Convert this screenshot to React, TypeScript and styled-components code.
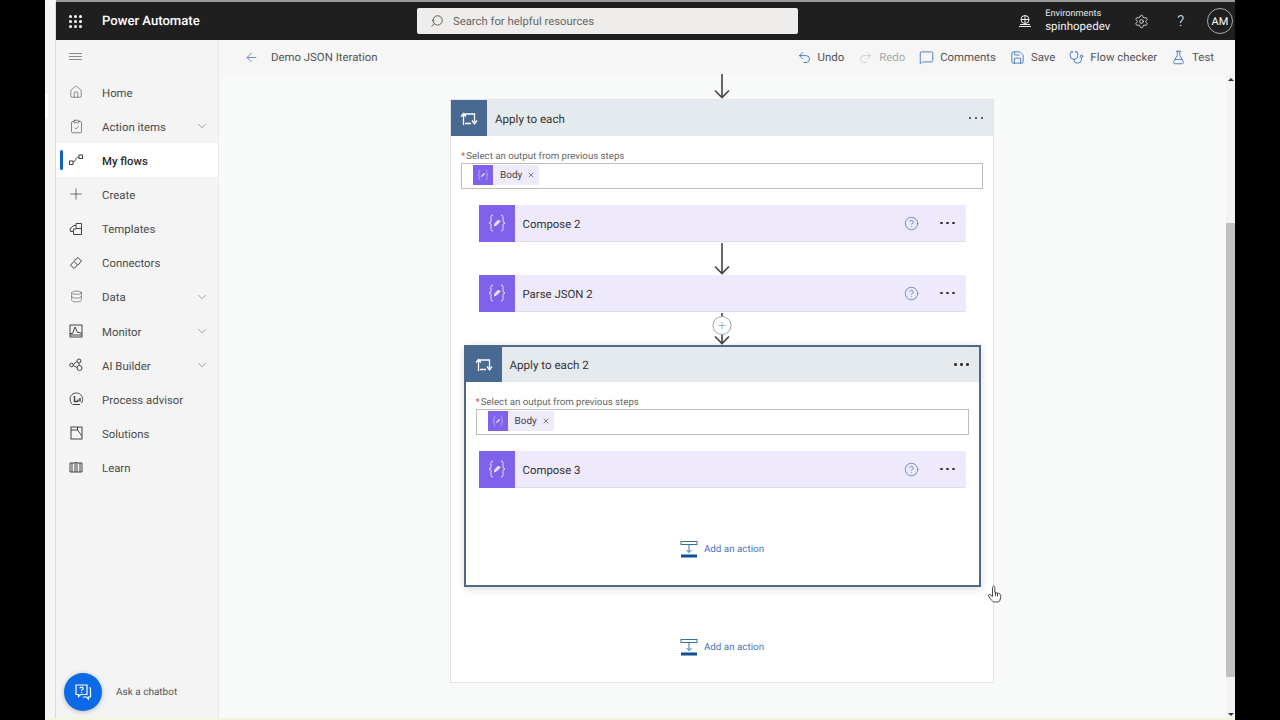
import React from 'react';
import styled, { createGlobalStyle } from 'styled-components';
import { ChevronDown, Plus, Undo2, Redo2, Settings, HelpCircle, Save, Stethoscope, FlaskConical, MessageSquare, ArrowLeft, Search, Home, ClipboardCheck, Database, X } from 'lucide-react';

const Global = createGlobalStyle`
  html, body { margin: 0; padding: 0; height: 100%; background: #000; overflow: hidden; }
  * { box-sizing: border-box; }
  body { font-family: Roboto, "Open Sans", sans-serif; text-rendering: geometricPrecision; }
`;

const Stage = styled.div`
  width: 1280px; height: 720px; display: flex; background: #000; position: relative; overflow: hidden;
`;
const Frame = styled.div`
  margin-left: 45px; width: 1190px; height: 720px; background: #f5f5f5; padding: 0 0 2px 11px; position: relative;
  border-bottom: 2px solid #f5f4dc;
  &::before { content: ''; position: absolute; left: 0; top: 94px; width: 3px; height: 24px; background: #fff; }
  &::after { content: ''; position: absolute; left: 10px; top: 2px; bottom: 0; width: 1px; background: #dcdcdc; }
`;
const Screen = styled.div`
  width: 100%; height: 716px; border-top: 2px solid #9b9b9b; display: flex; flex-direction: column; background: #f8f8f8; box-sizing: content-box;
`;
const TopBar = styled.header`
  height: 38px; background: #1f1f1f; color: #fff; display: flex; align-items: center; padding-left: 13px; flex: none;
`;
const Waffle = styled.div`
  width: 13px; display: grid; grid-template-columns: repeat(3, 3px); gap: 2px;
  span { width: 3px; height: 3px; background: #fff; border-radius: 50%; }
`;
const Brand = styled.div`
  margin-left: 20px; font-size: 13.1px; font-weight: 500; width: 315px; white-space: nowrap;
`;
const SearchBox = styled.div`
  width: 381px; height: 26px; background: #eeedeb; border-radius: 2px; display: flex; align-items: center; gap: 9px; padding-left: 13px;
  color: #666; font-size: 11.3px;
`;
const Right = styled.div`
  margin-left: auto; display: flex; align-items: center; height: 100%;
`;
const Env = styled.div`
  display: flex; flex-direction: column; margin: 0 0 2px 13px; width: 74px; line-height: 13px;
  small { font-size: 9.2px; color: #e8e8e8; }
  b { font-weight: 400; font-size: 11.5px; color: #f2f2f2; white-space: nowrap; }
`;
const Avatar = styled.div`
  width: 26px; height: 26px; border-radius: 50%; border: 1px solid #aaa; font-size: 11px; font-weight: 400; display: flex; align-items: center; justify-content: center; margin: 0 2px 0 23px;
`;
const GearButton = styled.div`
  margin-left: 15px; display: flex; align-items: center;
`;
const HelpMark = styled.div`
  margin-left: 28px; font-size: 15px; font-weight: 300; display: flex; align-items: center;
`;
const Body = styled.div`
  flex: 1; min-height: 0; display: flex;
`;
const Sidebar = styled.nav`
  width: 163px; flex: none; background: #f4f4f4; border-right: 1px solid #e8e8e8; display: flex; flex-direction: column; position: relative;
`;
const Burger = styled.div`
  height: 35px; padding: 13px 0 0 13px;
  span { display: block; width: 13px; height: 1px; margin-bottom: 2px; background: #8a8a8a; }
`;
const NavList = styled.ul`
  list-style: none; margin: 0; padding: 0;
`;
const NavItem = styled.li<{ $active?: boolean }>`
  height: 34.15px; display: flex; align-items: center; position: relative; padding-left: 10px;
  background: ${p => p.$active ? '#fff' : 'transparent'};
  color: ${p => p.$active ? '#2b2b2b' : '#4c4c4c'};
  font-size: 11.4px; font-weight: ${p => p.$active ? 500 : 400};
  span { margin-left: 16px; padding-top: 1px; flex: 1; white-space: nowrap; }
  svg.chev { margin-right: 9px; color: #666; }
  ${p => p.$active ? `&::before { content: ''; position: absolute; left: 4px; top: 7px; height: 20px; width: 3px; border-radius: 2px; background: #0f62c4; }` : ''}
`;
const IconSlot = styled.div`
  width: 20px; height: 20px; flex: none; display: flex; align-items: center; justify-content: center; color: #444;
`;
const Chatbot = styled.div`
  position: absolute; left: 8px; bottom: 7px; display: flex; align-items: center; gap: 14px; font-size: 10px; color: #555;
`;
const ChatCircle = styled.div`
  width: 38px; height: 38px; border-radius: 50%; background: #0b6ae6; display: flex; align-items: center; justify-content: center; box-shadow: 0 1px 5px rgba(0,0,0,.25);
`;
const Main = styled.main`
  flex: 1; min-width: 0; display: flex; flex-direction: column; position: relative;
`;
const Toolbar = styled.div`
  height: 34px; flex: none; background: #f6f6f6; display: flex; align-items: center; padding: 0 21px 0 25px; color: #555; font-size: 11.4px;
`;
const Title = styled.div`
  margin-left: 12px; color: #555; flex: 1;
`;
const Tool = styled.div<{ $off?: boolean }>`
  display: flex; align-items: center; gap: 6px; margin-left: 14px; color: ${p => p.$off ? '#aaa' : '#555'};
  svg { color: ${p => p.$off ? '#ccc' : '#3a6fb8'}; }
`;
const CanvasRow = styled.div`
  flex: 1; min-height: 0; display: flex;
`;
const Canvas = styled.div`
  flex: 1; min-width: 0; display: flex; flex-direction: column; align-items: center; overflow: hidden; background: #f8f9f9; padding-right: 1px;
`;
const Scrollbar = styled.div`
  width: 9px; flex: none; background: #f3f3f3; display: flex; flex-direction: column; padding-top: 149px; padding-bottom: 6px; position: relative;
  &::before, &::after { content: ''; position: absolute; left: 2px; border-left: 3px solid transparent; border-right: 3px solid transparent; }
  &::before { top: 4px; border-bottom: 3px solid #333; }
  &::after { bottom: 2px; border-top: 3px solid #333; }
`;
const Thumb = styled.div`
  height: 454px; background: #c1c1c1;
`;
const Connector = styled.div<{ $h: number }>`
  height: ${p => p.$h}px; flex: none; display: flex; justify-content: center; align-items: flex-end; position: relative; width: 100%;
`;
const Scope = styled.section<{ $nested?: boolean }>`
  flex: none;
  width: ${p => p.$nested ? 517 : 544}px;
  height: ${p => p.$nested ? 242 : 584}px;
  background: #fff;
  border: 1px solid ${p => p.$nested ? '#4e6a88' : '#e2e4e6'};
  ${p => p.$nested ? 'border-width: 2px; box-shadow: 0 2px 8px rgba(0,0,0,.14);' : ''}
  display: flex; flex-direction: column; align-items: center;
`;
const ScopeHead = styled.div<{ $nested?: boolean }>`
  width: 100%; height: ${p => p.$nested ? 35 : 36}px; flex: none; background: #e4eaed; display: flex; align-items: center; color: #333; font-size: 11.6px;
`;
const ScopeIcon = styled.div`
  width: 36px; height: 100%; flex: none; background: #486991; display: flex; align-items: center; justify-content: center;
`;
const HeadText = styled.div`
  margin-left: 8px; padding-top: 1px; flex: 1; white-space: nowrap;
`;
const Dots = styled.div<{ $r: number }>`
  display: flex; gap: 3.5px; margin-right: ${p => p.$r}px;
  i { width: 2.4px; height: 2.4px; border-radius: 50%; background: #333; }
`;
const Label = styled.div`
  align-self: flex-start; margin: 15px 0 0 10px; font-size: 9.7px; line-height: 12px; color: #666; white-space: nowrap;
  em { color: #c55; font-style: normal; margin-right: 1px; }
`;
const TokenInput = styled.div<{ $w: number }>`
  width: ${p => p.$w}px; height: 26px; flex: none; margin-bottom: 16px; background: #fff; border: 1px solid #bdbdbd; display: flex; align-items: center; padding-left: 11px;
`;
const Token = styled.div`
  height: 20px; margin-bottom: 2px; display: flex; align-items: center; background: #efebfb; font-size: 10px; color: #444; padding-right: 4px;
  b { width: 20px; height: 20px; background: #8061ec; display: flex; align-items: center; justify-content: center; margin-right: 7px; }
  svg.x { margin-left: 5px; color: #333; }
`;
const Action = styled.div`
  width: 487px; height: 37px; flex: none; background: #eeeafc; display: flex; align-items: center; font-size: 11.4px; color: #333; border-bottom: 1px solid #dedbea;
`;
const ActionIcon = styled.div`
  width: 36px; height: 37px; flex: none; background: #8061ec; display: flex; align-items: center; justify-content: center;
`;
const ActionText = styled.div`
  margin-left: 8px; padding-top: 2px; flex: 1; white-space: nowrap;
`;
const Help = styled.div`
  margin-right: 21px; display: flex; color: #4a72b5;
`;
const AddAction = styled.div<{ $top: number }>`
  display: flex; align-items: center; gap: 6px; margin-top: ${p => p.$top}px; color: #4c74b8; font-size: 9.8px;
`;
const PlusCircle = styled.div`
  position: absolute; left: 50%; top: 4px; transform: translateX(-50%); width: 19px; height: 19px; border-radius: 50%; background: #fff; border: 1px solid #9aa; display: flex; align-items: center; justify-content: center; color: #3a86b8;
`;
const Cursor = styled.div`
  position: absolute; left: 987px; top: 585px; color: #333;
`;

const Arrow = ({ h }: { h: number }) => (
  <svg width="16" height={h} viewBox={`0 0 16 ${h}`} fill="none" stroke="#444" strokeWidth="1.6">
    <path d={`M8 0V${h - 1}M1 ${h - 8.5}L8 ${h - 1.5}L15 ${h - 8.5}`} />
  </svg>
);
const LoopIcon = () => (
  <svg width="18" height="15" viewBox="0 0 18 15" fill="none" stroke="#fff" strokeWidth="1.3">
    <path d="M3.500 14V3H14.500V11M1 5.500L3.500 2.500L6 5.500M12 9.500L14.500 13L17 9.500M5 12.500H11" />
  </svg>
);
const BraceIcon = ({ s = 22 }: { s?: number }) => (
  <svg width={s} height={s} viewBox="0 0 22 22" fill="none" stroke="#fff" strokeWidth={1} opacity={s > 20 ? 0.85 : 0.65}>
    <path d="M7 3C4.500 3 5 5 5 7.500S5 10.500 3 11C5 11.500 5 12 5 14.500S4.500 19 7 19M15 3C17.500 3 17 5 17 7.500S17 10.500 19 11C17 11.500 17 12 17 14.500S17.500 19 15 19" />
    <path d="M8.500 14L9 11.500L12.500 8L14 9.500L10.500 13L8.500 14Z" fill="#fff" />
  </svg>
);
const AddIcon = () => (
  <svg width="18" height="18" viewBox="0 0 18 18" fill="none">
    <rect x="1" y="1.500" width="16" height="3" fill="#fff" stroke="#3c6ea5" />
    <path d="M9 4.500V12.500M6.500 10L9 12.500L11.500 10" stroke="#2f7fa8" />
    <rect x="1" y="14.500" width="16" height="3" fill="#0f4f94" />
  </svg>
);
const ChatIcon = () => (
  <svg width="18" height="18" viewBox="0 0 18 18" fill="none" stroke="#fff" strokeWidth="1.200">
    <path d="M2 2H13V11.500H6.500L4.500 13.500V11.500H2Z" />
    <path d="M15 5H16.500V14H14.500V16L12.500 14H9" />
    <path d="M5.800 5.300C6 3.800 9 3.800 9.200 5.300C9.300 6.500 7.500 6.500 7.500 8" />
    <path d="M7.500 9V10" />
  </svg>
);
const S = { fill: 'none', stroke: 'currentColor', strokeWidth: 1 } as const;
const NavIcons: Record<string, React.ReactNode> = {
  flows: <svg width="14" height="12" viewBox="0 0 14 12" {...S}><rect x="0.500" y="7" width="3.500" height="3.500" /><rect x="10" y="1" width="3.500" height="3.500" /><path d="M4 8C7 8 6 3 10 3" /></svg>,
  templates: <svg width="14" height="14" viewBox="0 0 14 14" {...S}><path d="M1 6.500L5 3.500H7V1.500H12.500V12.500H4.500V9.500H1.500Z M7 3.500V6.500H12.500 M4.500 9.500V7H7" /></svg>,
  connectors: <svg width="14" height="14" viewBox="0 0 14 14" {...S}><path d="M5 5L9 1.500L12.500 5L9 9 M1.500 9L5 5.500L8.500 9L5 12.500Z" /></svg>,
  monitor: <svg width="14" height="14" viewBox="0 0 14 14" {...S}><rect x="1" y="1" width="12" height="12" /><path d="M1 9.500H3.500L6 3L8.500 8.500H10L13 9.500M1 11H13" /></svg>,
  ai: <svg width="15" height="14" viewBox="0 0 15 14" {...S}><circle cx="2.500" cy="7" r="1.800" /><circle cx="10" cy="3" r="2" /><circle cx="10.500" cy="10" r="2.500" /><path d="M4.300 6.500L8 3.500M4.300 7.500L8 9.500M10 5V7.500" /></svg>,
  advisor: <svg width="15" height="14" viewBox="0 0 15 14" {...S}><path d="M3 12C.5 9.500.5 4.500 3 2.500S9.500 .5 11.500 2.500 14.500 8 12.500 11" /><path d="M5.500 4V9.500H9M9 7.500V9.500M11 6V9.500" strokeWidth="1.500" /><path d="M3.500 12.500H11" /></svg>,
  solutions: <svg width="13" height="14" viewBox="0 0 13 14" {...S}><rect x="1" y="1" width="11" height="12" /><path d="M1 4H7.500L12 10M7.500 1V4" /></svg>,
  learn: <svg width="14" height="13" viewBox="0 0 14 13" {...S}><path d="M1 2H6V11H1ZM8 2H13V11H8ZM6 2L7 1L8 2M6 11H8M3 2V11M11 2V11" /></svg>,
};
const nav = [
  { t: 'Home', i: <Home size={14} strokeWidth={1} /> },
  { t: 'Action items', i: <ClipboardCheck size={15} strokeWidth={1} />, c: true },
  { t: 'My flows', i: NavIcons.flows, a: true },
  { t: 'Create', i: <Plus size={18} strokeWidth={1} /> },
  { t: 'Templates', i: NavIcons.templates },
  { t: 'Connectors', i: NavIcons.connectors },
  { t: 'Data', i: <Database size={13} strokeWidth={1} />, c: true },
  { t: 'Monitor', i: NavIcons.monitor, c: true },
  { t: 'AI Builder', i: NavIcons.ai, c: true },
  { t: 'Process advisor', i: NavIcons.advisor },
  { t: 'Solutions', i: NavIcons.solutions },
  { t: 'Learn', i: NavIcons.learn },
];
const MoreDots = ({ r }: { r: number }) => <Dots $r={r}><i /><i /><i /></Dots>;
const ActionCard = ({ t }: { t: string }) => (
  <Action>
    <ActionIcon><BraceIcon /></ActionIcon>
    <ActionText>{t}</ActionText>
    <Help><HelpCircle size={15} strokeWidth={1.2} /></Help>
    <MoreDots r={11} />
  </Action>
);
const Tok = () => (
  <Token>
    <b><BraceIcon s={14} /></b>
    Body
    <X className="x" size={8} strokeWidth={1.8} />
  </Token>
);

export default function App() {
  return (
    <Stage>
      <Global />
      <Frame>
        <Screen>
          <TopBar>
            <Waffle>{Array.from({ length: 9 }).map((_, i) => <span key={i} />)}</Waffle>
            <Brand>Power Automate</Brand>
            <SearchBox><Search size={14} strokeWidth={1.2} color="#222" style={{ transform: 'scaleX(-1)' }} />Search for helpful resources</SearchBox>
            <Right>
              <svg width="14" height="14" viewBox="0 0 14 14" fill="none" stroke="#eee"><circle cx="7" cy="5.500" r="4" /><path d="M3 5.500H11M7 1.500V9.500M1 12.500H13M2 10.500H12" /></svg>
              <Env><small>Environments</small><b>spinhopedev</b></Env>
              <GearButton><Settings size={15} strokeWidth={1.2} /></GearButton>
              <HelpMark>?</HelpMark>
              <Avatar>AM</Avatar>
            </Right>
          </TopBar>
          <Body>
            <Sidebar>
              <Burger><span /><span /><span /></Burger>
              <NavList>
                {nav.map(n => (
                  <NavItem key={n.t} $active={n.a}>
                    <IconSlot>{n.i}</IconSlot>
                    <span>{n.t}</span>
                    {n.c && <ChevronDown className="chev" size={14} strokeWidth={1} />}
                  </NavItem>
                ))}
              </NavList>
              <Chatbot>
                <ChatCircle><ChatIcon /></ChatCircle>
                Ask a chatbot
              </Chatbot>
            </Sidebar>
            <Main>
              <Toolbar>
                <ArrowLeft size={15} strokeWidth={1.2} color="#3a6fb8" />
                <Title>Demo JSON Iteration</Title>
                <Tool><Undo2 size={15} strokeWidth={1.4} />Undo</Tool>
                <Tool $off><Redo2 size={15} strokeWidth={1.4} />Redo</Tool>
                <Tool><MessageSquare size={15} strokeWidth={1.4} />Comments</Tool>
                <Tool><Save size={15} strokeWidth={1.4} />Save</Tool>
                <Tool><Stethoscope size={15} strokeWidth={1.4} />Flow checker</Tool>
                <Tool><FlaskConical size={15} strokeWidth={1.4} />Test</Tool>
              </Toolbar>
              <CanvasRow>
                <Canvas>
                  <Connector $h={25}><Arrow h={25} /></Connector>
                  <Scope>
                    <ScopeHead><ScopeIcon><LoopIcon /></ScopeIcon><HeadText>Apply to each</HeadText><MoreDots r={10} /></ScopeHead>
                    <Label><em>*</em>Select an output from previous steps</Label>
                    <TokenInput $w={522}><Tok /></TokenInput>
                    <ActionCard t="Compose 2" />
                    <Connector $h={33}><Arrow h={32} /></Connector>
                    <ActionCard t="Parse JSON 2" />
                    <Connector $h={33}>
                      <Arrow h={32} />
                      <PlusCircle><Plus size={11} strokeWidth={1.2} /></PlusCircle>
                    </Connector>
                    <Scope $nested>
                      <ScopeHead $nested><ScopeIcon><LoopIcon /></ScopeIcon><HeadText>Apply to each 2</HeadText><MoreDots r={10} /></ScopeHead>
                      <Label><em>*</em>Select an output from previous steps</Label>
                      <TokenInput $w={493}><Tok /></TokenInput>
                      <ActionCard t="Compose 3" />
                      <AddAction $top={52}><AddIcon />Add an action</AddAction>
                    </Scope>
                    <AddAction $top={51}><AddIcon />Add an action</AddAction>
                  </Scope>
                </Canvas>
                <Scrollbar><Thumb /></Scrollbar>
              </CanvasRow>
            </Main>
          </Body>
        </Screen>
      </Frame>
      <Cursor>
        <svg width="16" height="18" viewBox="0 0 16 18" fill="#fff" stroke="#333" strokeWidth="0.900"><path d="M6 1.500C7 .8 7.800 1.500 7.800 2.500V7.500L12 8.500C13.500 9 14 10 13.800 11.500L13 15C12.800 16.500 11.500 17 10 17H7.500C6 17 5 16 4 14.500L1.500 11C1 10 2 9 3 9.500L5.500 11.500V2.500C5.500 2 5.700 1.700 6 1.500ZM8.500 8V11M10.500 8.500V11.500" /></svg>
      </Cursor>
    </Stage>
  );
}
